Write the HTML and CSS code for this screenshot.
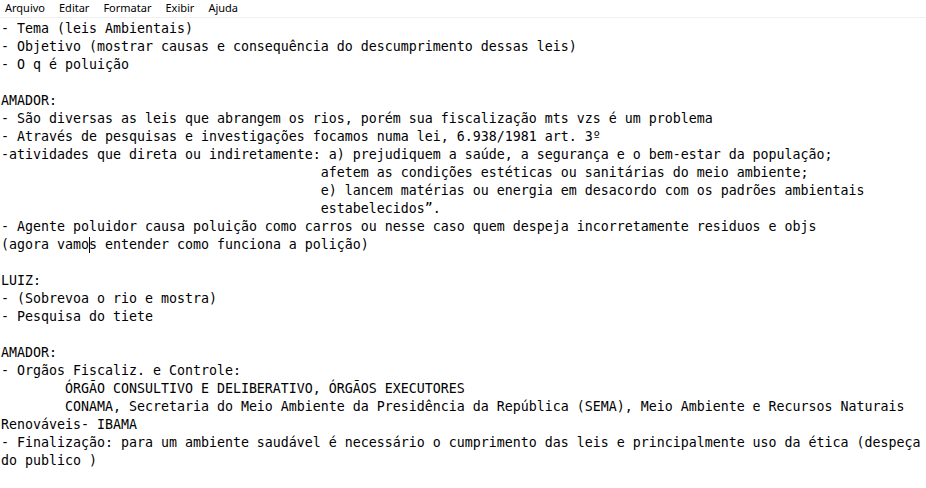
FILE: index.html
```html
<!DOCTYPE html>
<html lang="pt-BR">
<head>
<meta charset="utf-8">
<title>Bloco de Notas</title>
<link rel="stylesheet" href="styles.css">
</head>
<body>
<div class="window">
  <nav class="menubar">
    <span class="menu-item">Arquivo</span>
    <span class="menu-item">Editar</span>
    <span class="menu-item">Formatar</span>
    <span class="menu-item">Exibir</span>
    <span class="menu-item">Ajuda</span>
  </nav>
  <pre class="editor">- Tema (leis Ambientais)
- Objetivo (mostrar causas e consequência do descumprimento dessas leis)
- O q é poluição

AMADOR:
- São diversas as leis que abrangem os rios, porém sua fiscalização mts vzs é um problema
- Através de pesquisas e investigações focamos numa lei, 6.938/1981 art. 3º
-atividades que direta ou indiretamente: a) prejudiquem a saúde, a segurança e o bem-estar da população;
					afetem as condições estéticas ou sanitárias do meio ambiente;
					e) lancem matérias ou energia em desacordo com os padrões ambientais
					estabelecidos”.
- Agente poluidor causa poluição como carros ou nesse caso quem despeja incorretamente residuos e objs
(agora vamo<span class="caret"></span>s entender como funciona a polição)

LUIZ:
- (Sobrevoa o rio e mostra)
- Pesquisa do tiete

AMADOR:
- Orgãos Fiscaliz. e Controle:
	ÓRGÃO CONSULTIVO E DELIBERATIVO, ÓRGÃOS EXECUTORES
	CONAMA, Secretaria do Meio Ambiente da Presidência da República (SEMA), Meio Ambiente e Recursos Naturais
Renováveis- IBAMA
- Finalização: para um ambiente saudável é necessário o cumprimento das leis e principalmente uso da ética (despeça
do publico )</pre>
</div>
</body>
</html>
```
FILE: styles.css
```css
html, body {
  margin: 0;
  padding: 0;
  background: #ffffff;
}

.window {
  width: 926px;
  height: 488px;
  overflow: hidden;
  display: flex;
  flex-direction: column;
  background: #ffffff;
}

.menubar {
  display: flex;
  align-items: center;
  height: 17px;
  border-bottom: 1px solid #f0f0f0;
  padding-left: 0;
  font-family: "Noto Sans", "Open Sans", sans-serif;
  font-size: 11px;
  color: #000000;
}

.menu-item {
  padding: 0 7px 1px 5px;
  margin-right: 2px;
  line-height: 16px;
}

.editor {
  margin: 0;
  padding: 2px 0 0 1px;
  font-family: "DejaVu Sans Mono", "Liberation Mono", monospace;
  font-size: 13.29px;
  line-height: 18px;
  color: #000000;
  white-space: pre;
  tab-size: 8;
  -moz-tab-size: 8;
  overflow: hidden;
}

.caret {
  display: inline-block;
  width: 0;
  height: 16px;
  border-left: 1px solid #000000;
  margin-right: -1px;
  vertical-align: -4px;
}
```
